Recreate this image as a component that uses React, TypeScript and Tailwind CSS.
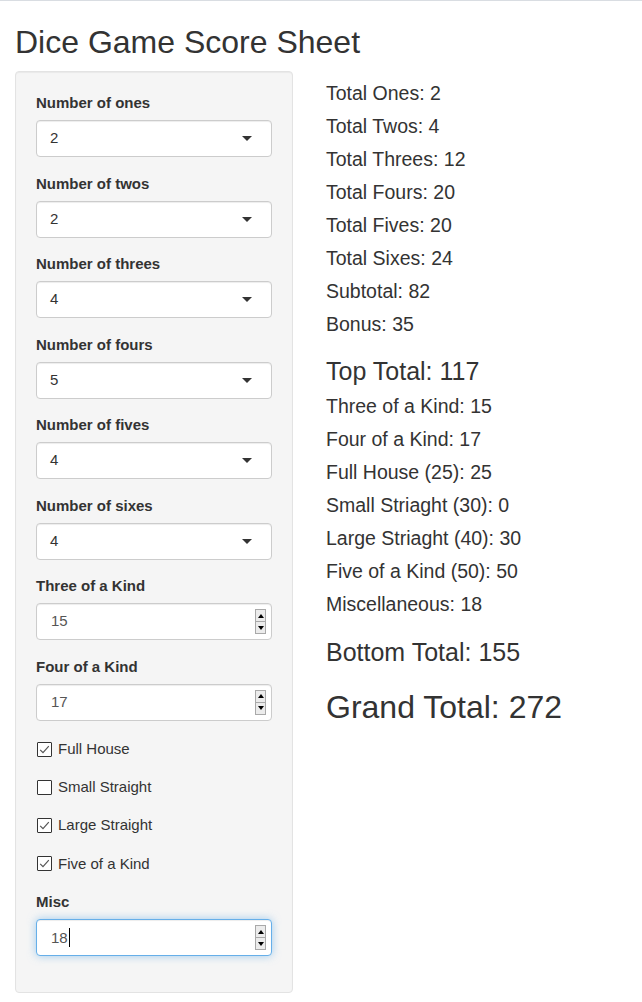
import React from "react";

const font = "font-['Liberation_Sans',Arial,Helvetica,sans-serif]";

function Label({ children }: { children: React.ReactNode }) {
  return <div className="h-[21px] leading-[21px] text-[15px] font-bold text-[#333333]">{children}</div>;
}

function SelectGroup({ label, value }: { label: string; value: string }) {
  return (
    <div className="mb-[15.5px] flex flex-col gap-[7px]">
      <Label>{label}</Label>
      <div className="flex h-[37px] items-center justify-between rounded-[4px] border border-[#cccccc] bg-white pl-[13px] pr-[19px] text-[15px] text-[#333333] shadow-[inset_0_1px_1px_rgba(0,0,0,0.075)]">
        <span>{value}</span>
        <span className="h-0 w-0 border-x-[5px] border-t-[5px] border-x-transparent border-t-[#333333]" />
      </div>
    </div>
  );
}

function Spinner() {
  return (
    <div className="flex h-[25px] w-[11px] flex-col border border-[#a9a9a9] bg-[#ececec]">
      <div className="flex flex-1 items-center justify-center border-b border-[#a9a9a9]">
        <span className="h-0 w-0 border-x-[3.5px] border-b-[4px] border-x-transparent border-b-black" />
      </div>
      <div className="flex flex-1 items-center justify-center">
        <span className="h-0 w-0 border-x-[3.5px] border-t-[4px] border-x-transparent border-t-black" />
      </div>
    </div>
  );
}

function NumberGroup({ label, value, focused, last }: { label: string; value: string; focused?: boolean; last?: boolean }) {
  return (
    <div className={`flex flex-col gap-[7px] ${last ? "" : "mb-[15.5px]"}`}>
      <Label>{label}</Label>
      <div
        className={
          focused
            ? "flex h-[37px] items-center justify-between rounded-[4px] border border-[#66afe9] bg-white pl-[14px] pr-[5px] text-[15px] text-[#555555] shadow-[inset_0_1px_1px_rgba(0,0,0,0.075),0_0_8px_rgba(102,175,233,0.6)]"
            : "flex h-[37px] items-center justify-between rounded-[4px] border border-[#cccccc] bg-white pl-[14px] pr-[5px] text-[15px] text-[#555555] shadow-[inset_0_1px_1px_rgba(0,0,0,0.075)]"
        }
      >
        <span className="flex items-center">
          {value}
          {focused ? <span className="ml-[1px] inline-block h-[19px] w-[1px] bg-black" /> : null}
        </span>
        <Spinner />
      </div>
    </div>
  );
}

function Check({ label, checked }: { label: string; checked: boolean }) {
  return (
    <div className="flex h-[21px] items-center gap-[6px] text-[15px] text-[#333333]">
      <span className="ml-[1px] flex h-[15px] w-[15px] items-center justify-center rounded-[1px] border border-[#333333] bg-white">
        {checked ? (
          <svg width="13" height="13" viewBox="0 0 13 13">
            <path d="M2.2 6.8 L5 9.6 L10.8 3.2" fill="none" stroke="#555" strokeWidth="1.2" />
          </svg>
        ) : null}
      </span>
      <span>{label}</span>
    </div>
  );
}

function Line({ children }: { children: React.ReactNode }) {
  return <div className="h-[33px] leading-[33px] text-[19.5px] whitespace-nowrap">{children}</div>;
}

export default function App() {
  return (
    <div className={`${font} min-h-[1002px] border-t border-[#d9dde2] bg-white px-[15px] text-[#333333]`}>
      <h2 className="pt-[23px] text-[32px] leading-[36px] font-normal">Dice Game Score Sheet</h2>
      <div className="mt-[11px] flex gap-[33px]">
        <div className="w-[278px] shrink-0 rounded-[4px] border border-[#e3e3e3] bg-[#f5f5f5] px-[20px] pt-[20px] pb-[20px] shadow-[inset_0_1px_1px_rgba(0,0,0,0.05)]">
          <SelectGroup label="Number of ones" value="2" />
          <SelectGroup label="Number of twos" value="2" />
          <SelectGroup label="Number of threes" value="4" />
          <SelectGroup label="Number of fours" value="5" />
          <SelectGroup label="Number of fives" value="4" />
          <SelectGroup label="Number of sixes" value="4" />
          <NumberGroup label="Three of a Kind" value="15" />
          <NumberGroup label="Four of a Kind" value="17" last />
          <div className="mt-[18px] flex flex-col gap-[17.33px]">
            <Check label="Full House" checked />
            <Check label="Small Straight" checked={false} />
            <Check label="Large Straight" checked />
            <Check label="Five of a Kind" checked />
          </div>
          <div className="mt-[17px] mb-[15.5px]">
            <NumberGroup label="Misc" value="18" focused last />
          </div>
        </div>
        <div className="pt-[6px]">
          <Line>Total Ones: 2</Line>
          <Line>Total Twos: 4</Line>
          <Line>Total Threes: 12</Line>
          <Line>Total Fours: 20</Line>
          <Line>Total Fives: 20</Line>
          <Line>Total Sixes: 24</Line>
          <Line>Subtotal: 82</Line>
          <Line>Bonus: 35</Line>
          <div className="mt-[12px] h-[36px] leading-[36px] text-[25px] whitespace-nowrap">Top Total: 117</div>
          <div className="mt-[1px]">
            <Line>Three of a Kind: 15</Line>
            <Line>Four of a Kind: 17</Line>
            <Line>Full House (25): 25</Line>
            <Line>Small Striaght (30): 0</Line>
            <Line>Large Striaght (40): 30</Line>
            <Line>Five of a Kind (50): 50</Line>
            <Line>Miscellaneous: 18</Line>
          </div>
          <div className="mt-[13px] h-[36px] leading-[36px] text-[25px] whitespace-nowrap">Bottom Total: 155</div>
          <div className="mt-[17px] h-[40px] leading-[40px] text-[32px] whitespace-nowrap">Grand Total: 272</div>
        </div>
      </div>
    </div>
  );
}
